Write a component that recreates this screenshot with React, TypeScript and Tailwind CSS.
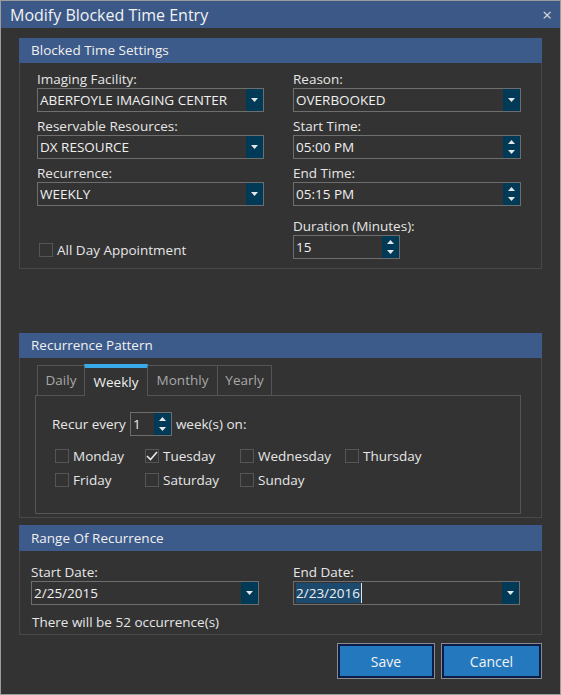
import React from 'react';

const font = { fontFamily: '"Open Sans", "Noto Sans", sans-serif' };

const DownArrow = () => (
  <svg width="7" height="4" viewBox="0 0 7 4">
    <polygon points="0,0 7,0 3.5,4" fill="#e6e6e6" />
  </svg>
);

const SpinArrows = () => (
  <div className="flex flex-col items-center gap-[6px]">
    <svg width="7" height="4" viewBox="0 0 7 4">
      <polygon points="0,4 7,4 3.5,0" fill="#e6e6e6" />
    </svg>
    <svg width="7" height="4" viewBox="0 0 7 4">
      <polygon points="0,0 7,0 3.5,4" fill="#e6e6e6" />
    </svg>
  </div>
);

const Combo: React.FC<{ value: string; selected?: boolean }> = ({ value, selected }) => (
  <div className="flex h-[24px] border border-[#6e6e6e] bg-[#333333]">
    <div className="flex-1 flex items-center pl-[2px] text-[13.5px] text-[#f0f0f0]">
      {selected ? (
        <span className="bg-[#1c4a6e] pr-[1px] border-r border-[#e0e0e0]">{value}</span>
      ) : (
        value
      )}
    </div>
    <div className="w-[17px] bg-[#003a57] flex items-center justify-center">
      <DownArrow />
    </div>
  </div>
);

const Spin: React.FC<{ value: string; className?: string }> = ({ value, className }) => (
  <div className={`flex h-[24px] border border-[#6e6e6e] bg-[#333333] ${className || ''}`}>
    <div className="flex-1 flex items-center pl-[2px] text-[13.5px] text-[#f0f0f0]">{value}</div>
    <div className="w-[17px] bg-[#003a57] flex items-center justify-center">
      <SpinArrows />
    </div>
  </div>
);

const Label: React.FC<{ children: React.ReactNode }> = ({ children }) => (
  <div className="h-[18px] leading-[18px] text-[13.5px] text-[#e6e6e6]">{children}</div>
);

const Check: React.FC<{ label: string; checked?: boolean; className?: string }> = ({ label, checked, className }) => (
  <div className={`flex items-center h-[16px] ${className || ''}`}>
    <div className="w-[14px] h-[14px] border border-[#555555] flex items-center justify-center">
      {checked && (
        <svg width="12" height="10" viewBox="0 0 12 10">
          <polyline points="1,5 4.5,8.5 11,1" fill="none" stroke="#e8e8e8" strokeWidth="1.6" />
        </svg>
      )}
    </div>
    <span className="ml-[4px] text-[13.5px] text-[#e6e6e6]">{label}</span>
  </div>
);

const SectionHeader: React.FC<{ title: string; tall?: boolean }> = ({ title, tall }) => (
  <div className={`${tall ? 'h-[26px]' : 'h-[25px]'} bg-[#3c5a8a] flex items-center pl-[12px] text-[13.5px] text-[#f0f0f0]`}>
    {title}
  </div>
);

const tabs = ['Daily', 'Weekly', 'Monthly', 'Yearly'];
const tabWidths = ['w-[48px]', 'w-[64px]', 'w-[71px]', 'w-[55px]'];

export default function App() {
  return (
    <div style={font} className="w-[561px] h-[695px] bg-[#333333] border border-[#9c9c9c] flex flex-col overflow-hidden">
      {/* Title */}
      <div className="h-[27px] bg-[#3b5887] flex items-center justify-between pl-[9px] pr-[8px] shrink-0">
        <span className="text-[16px] text-[#f2f2f2]">Modify Blocked Time Entry</span>
        <span className="text-[17px] text-[#d8d8d8] leading-none">×</span>
      </div>

      <div className="pl-[18px] w-[541px]">
        {/* Blocked Time Settings */}
        <div className="mt-[10px]">
          <SectionHeader title="Blocked Time Settings" />
          <div className="h-[206px] border-x border-b border-[#4d4646] pt-[7px] px-[17px] flex gap-[29px]">
            <div className="w-[227px] flex flex-col">
              <Label>Imaging Facility:</Label>
              <Combo value="ABERFOYLE IMAGING CENTER" />
              <div className="mt-[5px]">
                <Label>Reservable Resources:</Label>
              </div>
              <Combo value="DX RESOURCE" />
              <div className="mt-[5px]">
                <Label>Recurrence:</Label>
              </div>
              <Combo value="WEEKLY" />
              <Check label="All Day Appointment" className="mt-[36px] ml-[2px]" />
            </div>
            <div className="w-[228px] flex flex-col">
              <Label>Reason:</Label>
              <Combo value="OVERBOOKED" />
              <div className="mt-[5px]">
                <Label>Start Time:</Label>
              </div>
              <Spin value="05:00 PM" />
              <div className="mt-[5px]">
                <Label>End Time:</Label>
              </div>
              <Spin value="05:15 PM" />
              <div className="mt-[11px]">
                <Label>Duration (Minutes):</Label>
              </div>
              <Spin value="15" className="w-[107px]" />
            </div>
          </div>
        </div>

        {/* Recurrence Pattern */}
        <div className="mt-[64px]">
          <SectionHeader title="Recurrence Pattern" />
          <div className="h-[160px] border-x border-b border-[#4d4646] pt-[5px] pl-[15px]">
            <div className="flex pl-[2px] h-[32px] items-end">
              {tabs.map((t, i) => {
                const active = t === 'Weekly';
                return (
                  <div
                    key={t}
                    className={`${tabWidths[i]} ${
                      active
                        ? 'h-[32px] border-t-[4px] border-t-[#3aa9ea] border-x border-[#555555] bg-[#333333] relative z-10 -mb-px text-[#f0f0f0]'
                        : 'h-[30px] border border-[#555555] border-b-0 text-[#a8a8a8]'
                    } ${i > 0 ? '-ml-px' : ''} flex items-center justify-center text-[13.5px]`}
                  >
                    {t}
                  </div>
                );
              })}
            </div>
            <div className="w-[486px] h-[119px] border border-[#555555] pl-[16px] pt-[16px]">
              <div className="flex items-center h-[24px]">
                <span className="text-[13.5px] text-[#e6e6e6]">Recur every</span>
                <Spin value="1" className="w-[42px] ml-[4px]" />
                <span className="ml-[4px] text-[13.5px] text-[#e6e6e6]">week(s) on:</span>
              </div>
              <div className="mt-[12px] flex flex-col gap-[8px] pl-[3px]">
                <div className="flex">
                  <Check label="Monday" className="w-[90px]" />
                  <Check label="Tuesday" checked className="w-[95px]" />
                  <Check label="Wednesday" className="w-[105px]" />
                  <Check label="Thursday" />
                </div>
                <div className="flex">
                  <Check label="Friday" className="w-[90px]" />
                  <Check label="Saturday" className="w-[95px]" />
                  <Check label="Sunday" />
                </div>
              </div>
            </div>
          </div>
        </div>

        {/* Range Of Recurrence */}
        <div className="mt-[7px]">
          <SectionHeader title="Range Of Recurrence" tall />
          <div className="h-[84px] border-x border-b border-[#4d4646] pt-[12px] pl-[11px] flex flex-col">
            <div className="flex gap-[34px]">
              <div className="w-[228px]">
                <Label>Start Date:</Label>
                <Combo value="2/25/2015" />
              </div>
              <div className="w-[227px]">
                <Label>End Date:</Label>
                <Combo value="2/23/2016" selected />
              </div>
            </div>
            <div className="mt-[7px] text-[13.5px] text-[#e6e6e6] pl-[1px]">There will be 52 occurrence(s)</div>
          </div>
        </div>

        {/* Buttons */}
        <div className="flex justify-end gap-[6px] mt-[8px]">
          <button className="w-[98px] h-[36px] border border-[#8a8a8a] bg-[#0b1c48] p-[2px]">
            <div className="w-full h-full bg-[#2479be] flex items-center justify-center text-[14px] text-[#f2f2f2]">Save</div>
          </button>
          <button className="w-[101px] h-[36px] border border-[#8a8a8a] bg-[#0b1c48] p-[2px]">
            <div className="w-full h-full bg-[#2479be] flex items-center justify-center text-[14px] text-[#f2f2f2]">Cancel</div>
          </button>
        </div>
      </div>
    </div>
  );
}
